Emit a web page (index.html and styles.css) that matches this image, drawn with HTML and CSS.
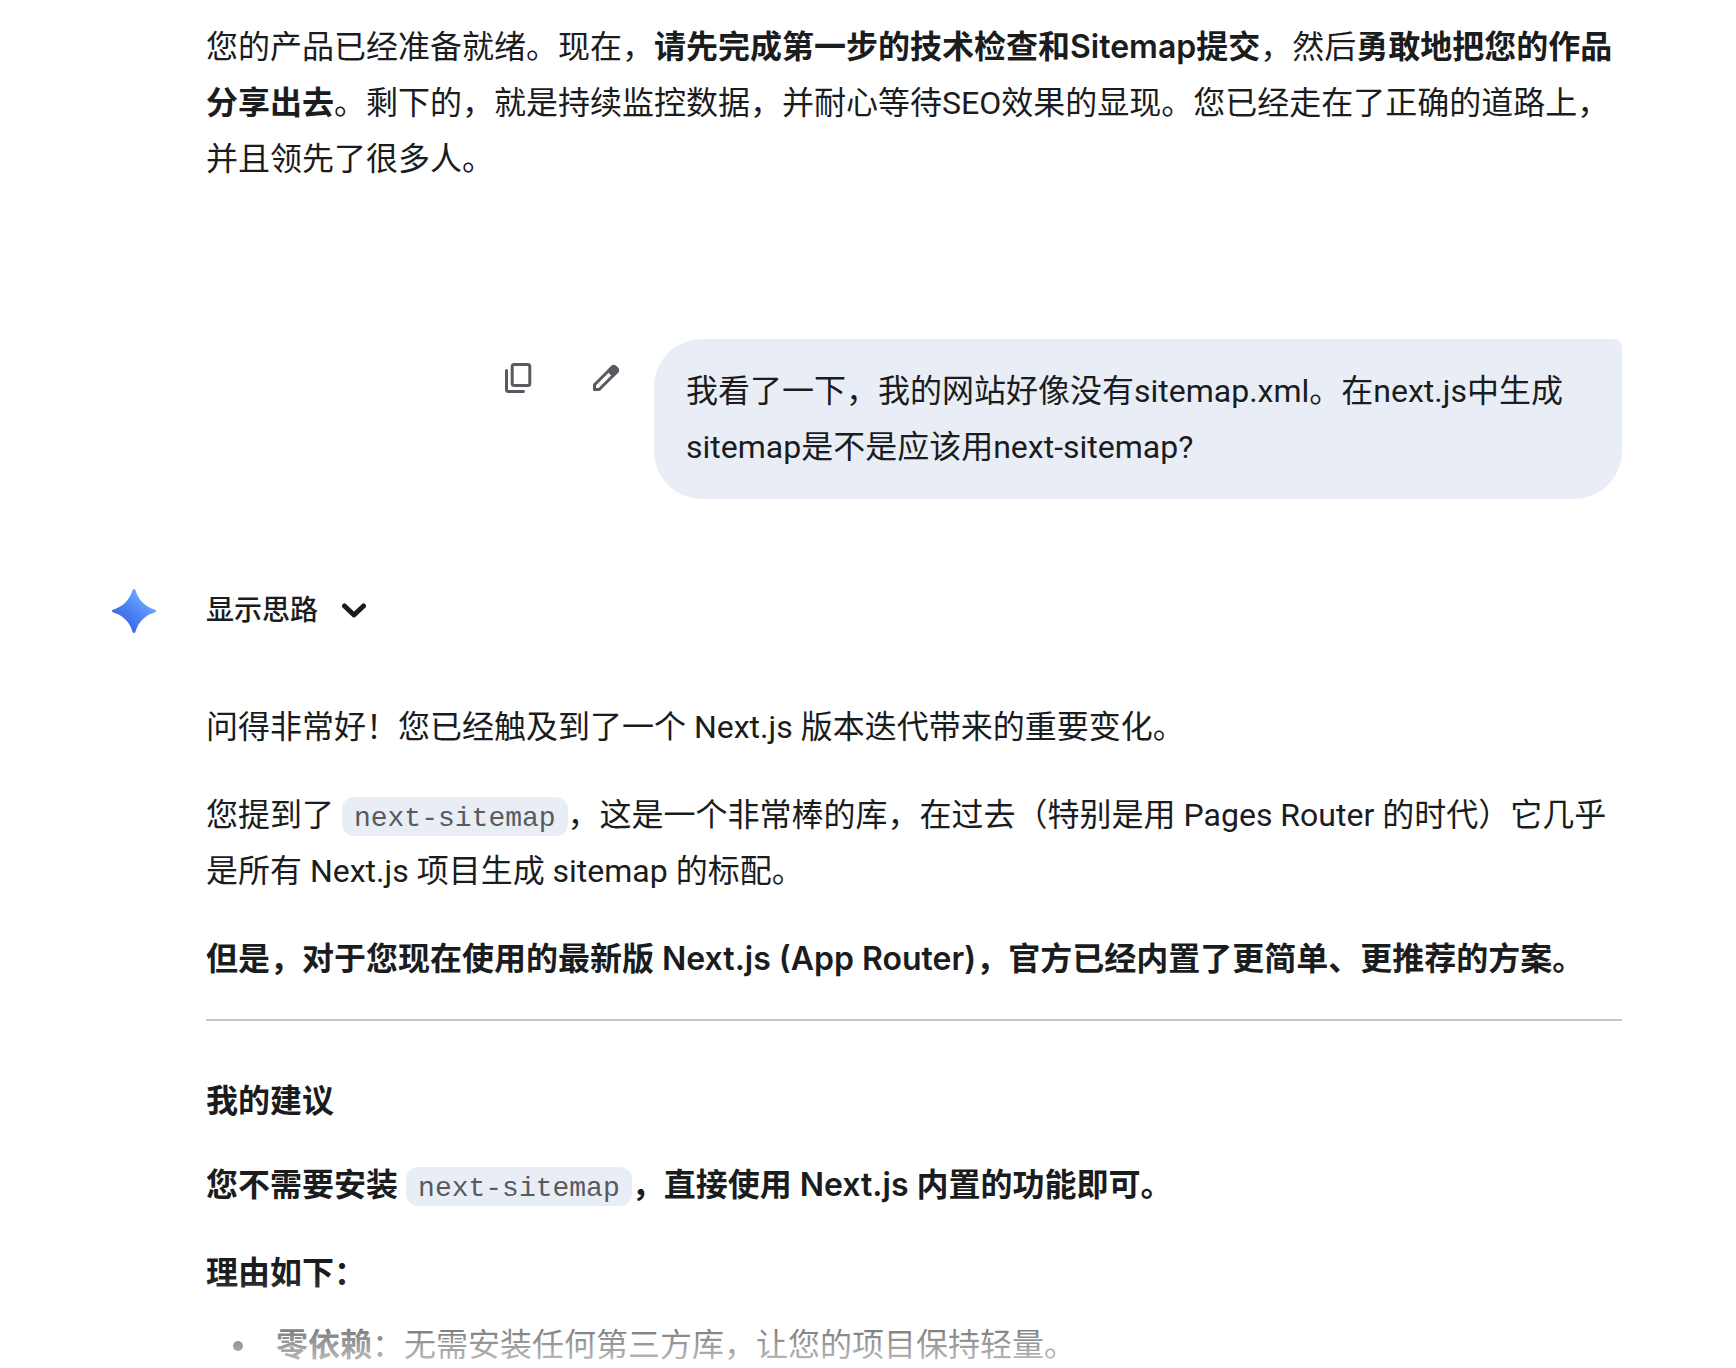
FILE: index.html
```html
<!DOCTYPE html>
<html lang="zh-CN">
<head>
  <meta charset="utf-8">
  <meta name="viewport" content="width=device-width, initial-scale=1">
  <title>对话</title>
  <link rel="stylesheet" href="styles.css">
</head>
<body>
  <main class="chat">
    <div class="thread">
      <article class="reply prose">
        <p>您的产品已经准备就绪。现在，<strong>请先完成第一步的技术检查和Sitemap提交</strong>，然后<strong>勇敢地把您的作品分享出去</strong>。剩下的，就是持续监控数据，并耐心等待SEO效果的显现。您已经走在了正确的道路上，并且领先了很多人。</p>
      </article>

      <section class="query">
        <button class="icon-button" type="button" aria-label="复制">
          <svg class="icon" viewBox="0 0 36 36" aria-hidden="true">
            <rect x="12.2" y="4.5" width="17.6" height="21" rx="2"/>
            <path d="M6.5 10.5V29.5a2 2 0 0 0 2 2H23.5"/>
          </svg>
        </button>
        <button class="icon-button" type="button" aria-label="修改">
          <svg class="icon" viewBox="0 0 36 36" aria-hidden="true">
            <path d="M6.5 29.5V24.8L24.3 7a2 2 0 0 1 2.8 0l1.9 1.9a2 2 0 0 1 0 2.8L11.2 29.5Z"/>
            <path class="icon-solid" d="M20.5 10.8L24.3 7h2.8l1.9 1.9v2.8L25.2 15.5Z"/>
          </svg>
        </button>
        <p class="bubble">我看了一下，我的网站好像没有sitemap.xml。在next.js中生成sitemap是不是应该用next-sitemap?</p>
      </section>

      <article class="reply">
        <header class="reply-header">
          <svg class="spark" viewBox="0 0 44 44" aria-hidden="true">
            <defs>
              <linearGradient id="spark-fill" x1="10" y1="34" x2="32" y2="10" gradientUnits="userSpaceOnUse">
                <stop offset="0" stop-color="#4068e8"/>
                <stop offset="0.5" stop-color="#4c83f5"/>
                <stop offset="1" stop-color="#69a6fd"/>
              </linearGradient>
            </defs>
            <path fill="url(#spark-fill)" d="M22 0C22.8 0 23.3.6 23.6 1.5C26.5 11 33 17.5 42.5 20.4C43.4 20.7 44 21.2 44 22C44 22.8 43.4 23.3 42.5 23.6C33 26.5 26.5 33 23.6 42.5C23.3 43.4 22.8 44 22 44C21.2 44 20.7 43.4 20.4 42.5C17.5 33 11 26.5 1.5 23.6C.6 23.3 0 22.8 0 22C0 21.2.6 20.7 1.5 20.4C11 17.5 17.5 11 20.4 1.5C20.7.6 21.2 0 22 0Z"/>
          </svg>
          <button class="thoughts" type="button" aria-expanded="false">
            显示思路
            <svg class="chevron" viewBox="0 0 24 16" aria-hidden="true">
              <path d="M2.5 3L12 12L21.5 3"/>
            </svg>
          </button>
        </header>

        <div class="prose">
          <p>问得非常好！您已经触及到了一个 Next.js 版本迭代带来的重要变化。</p>
          <p>您提到了 <code>next-sitemap</code>，这是一个非常棒的库，在过去（特别是用 Pages Router 的时代）它几乎是所有 Next.js 项目生成 sitemap 的标配。</p>
          <p><strong>但是，对于您现在使用的最新版 Next.js (App Router)，官方已经内置了更简单、更推荐的方案。</strong></p>
          <hr>
          <h3>我的建议</h3>
          <p><strong>您不需要安装 <code>next-sitemap</code>，直接使用 Next.js 内置的功能即可。</strong></p>
          <p><strong>理由如下：</strong></p>
          <ul>
            <li><strong>零依赖</strong>：无需安装任何第三方库，让您的项目保持轻量。</li>
          </ul>
        </div>
      </article>
    </div>
    <div class="fade"></div>
  </main>
</body>
</html>
```
FILE: styles.css
```css
* {
  box-sizing: border-box;
}

body {
  margin: 0;
  background: #fff;
  color: #1b1c1d;
  font: 400 32px/56px Roboto, "Noto Sans CJK SC", sans-serif;
}

button {
  border: 0;
  padding: 0;
  background: none;
  color: inherit;
  font: inherit;
  cursor: pointer;
}

.chat {
  position: relative;
  height: 100vh;
  overflow: hidden;
}

.thread {
  padding: 19px 114px 0 206px;
}

/* Message text */

.prose p {
  margin: 0 0 32px;
}

.prose p:last-child {
  margin-bottom: 0;
}

.prose strong,
.prose h3 {
  font-family: Inter, "Noto Sans CJK SC", sans-serif;
  font-weight: 600;
}

.prose strong {
  line-height: 1;
}

.prose h3 {
  margin: 0 0 32px;
  font-size: 32px;
  line-height: 48px;
}

.prose code {
  padding: 6px 12px 2px;
  border-radius: 12px;
  background: #e9eef6;
  color: #575b5f;
  font: 400 28px/1 "Liberation Mono", monospace;
}

.prose hr {
  height: 2px;
  margin: 0 0 56px;
  border: 0;
  background: #c4c7c5;
}

.prose ul {
  margin: -16px 0 0;
  padding: 0 0 0 70px;
  list-style: none;
}

.prose li {
  position: relative;
}

.prose li::before {
  content: "";
  position: absolute;
  top: 24px;
  left: -43px;
  width: 10px;
  height: 10px;
  border-radius: 50%;
  background: currentColor;
}

/* User message */

.query {
  display: flex;
  justify-content: flex-end;
  align-items: flex-start;
  gap: 8px;
  margin: 152px 0 88px;
}

.icon-button {
  display: grid;
  place-items: center;
  flex: none;
  width: 80px;
  height: 78px;
}

.icon {
  width: 36px;
  height: 36px;
  fill: none;
  stroke: #575b5f;
  stroke-width: 3;
  stroke-linecap: round;
  stroke-linejoin: round;
}

.icon-solid {
  fill: #575b5f;
}

.bubble {
  flex: 0 1 968px;
  margin: 0;
  padding: 24px 32px;
  border-radius: 48px 8px 48px 48px;
  background: #e9eef6;
}

/* Reply header */

.reply-header {
  display: flex;
  align-items: center;
  gap: 50px;
  height: 48px;
  margin: 0 0 64px -94px;
}

.spark {
  width: 44px;
  height: 44px;
}

.thoughts {
  display: flex;
  align-items: center;
  gap: 24px;
  font-size: 28px;
  font-weight: 500;
  line-height: 48px;
}

.chevron {
  width: 24px;
  height: 16px;
  fill: none;
  stroke: currentColor;
  stroke-width: 5;
  stroke-linecap: round;
  stroke-linejoin: round;
}

.fade {
  position: absolute;
  right: 0;
  bottom: 0;
  left: 0;
  height: 93px;
  background: linear-gradient(rgb(255 255 255 / 0), rgb(255 255 255 / 0.75));
  pointer-events: none;
}
```
